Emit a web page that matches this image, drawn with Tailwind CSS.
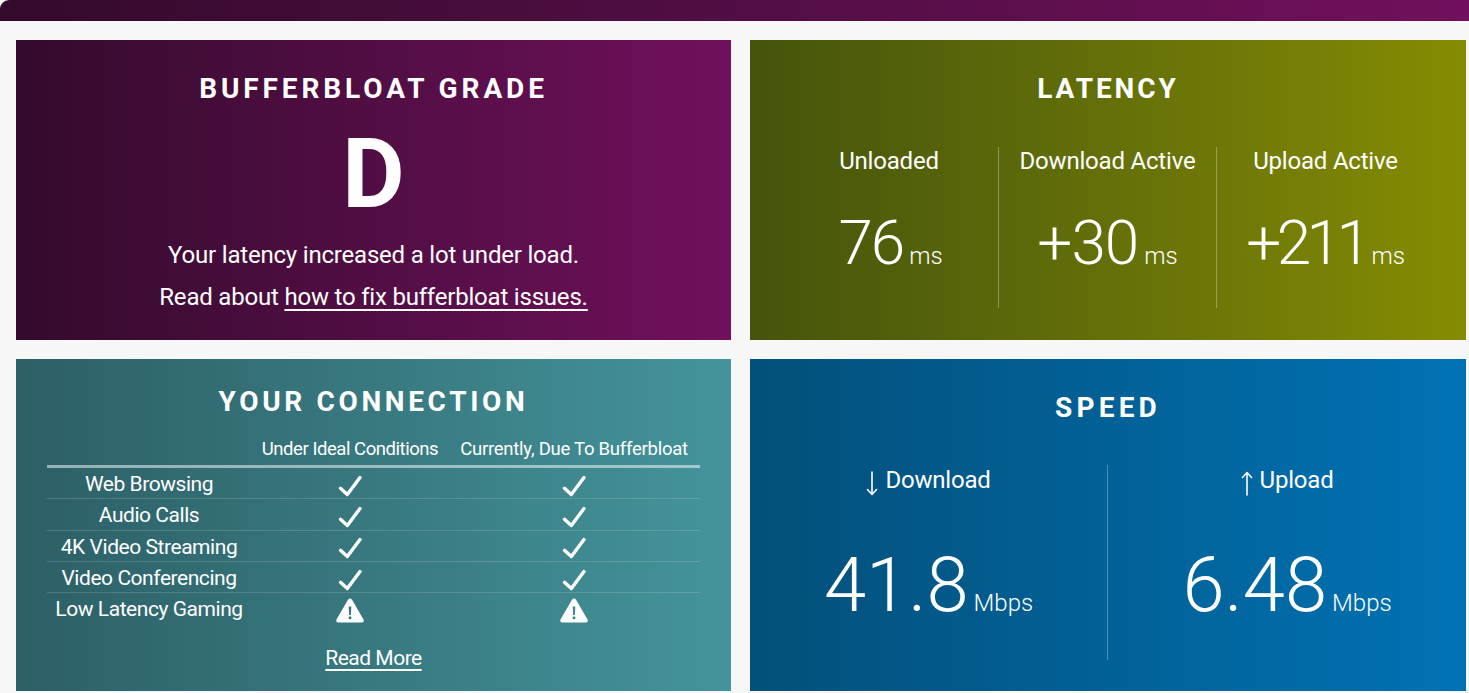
<!DOCTYPE html>
<html lang="en">
<head>
    <meta charset="UTF-8">
    <meta name="viewport" content="width=device-width, initial-scale=1.0">
    <title>Bufferbloat Test Results</title>
    <script src="https://cdn.jsdelivr.net/npm/@tailwindcss/browser@4"></script>
</head>
<body class="bg-[#f7f7f7] h-[693px] overflow-hidden font-['Roboto',sans-serif] text-white">

    <div class="h-[21px] rounded-tl-[9px] bg-linear-to-r from-[#340a2d] to-[#71105c]"></div>

    <main class="grid grid-cols-[715px_716px] grid-rows-[300px_332px] gap-x-[19px] gap-y-[19px] pl-[16px] pt-[19px]">

        <!-- grade -->
        <section class="bg-linear-to-r from-[#340a2d] to-[#71105c] flex flex-col items-center pt-[31px]">
            <h2 class="h-[36px] leading-[36px] text-[28px] font-bold tracking-[3.9px]">BUFFERBLOAT GRADE</h2>
            <div class="mt-[19px] h-[96px] leading-[96px] text-[96px] font-bold">D</div>
            <p class="mt-[12px] h-[42px] leading-[42px] text-[24px] tracking-[-0.2px]">Your latency increased a lot under load.</p>
            <p class="h-[42px] leading-[42px] text-[24px] tracking-[-0.2px]">Read about <a href="#" class="underline decoration-[1.5px] underline-offset-[4px]">how to fix bufferbloat issues.</a></p>
        </section>

        <!-- latency -->
        <section class="bg-linear-to-r from-[#45540b] to-[#858c02] flex flex-col items-center pt-[31px]">
            <h2 class="h-[36px] leading-[36px] text-[28px] font-bold tracking-[2.9px]">LATENCY</h2>
            <div class="mt-[40px] mr-[2px] w-[654px] grid grid-cols-3 h-[161px]">
                <div class="flex flex-col items-center">
                    <div class="mt-[-1px] h-[30px] leading-[30px] text-[24px] tracking-[-0.2px]">Unloaded</div>
                    <div class="mt-[31px] pl-[3px] flex items-baseline">
                        <span class="text-[62px] leading-[72px] font-light tracking-[-2px]">76</span>
                        <span class="ml-[6px] text-[24px] font-light">ms</span>
                    </div>
                </div>
                <div class="flex flex-col items-center border-l border-white/30">
                    <div class="mt-[-1px] h-[30px] leading-[30px] text-[24px] tracking-[-0.2px]">Download Active</div>
                    <div class="mt-[31px] flex items-baseline">
                        <span class="text-[62px] leading-[72px] font-light tracking-[-1px]">+30</span>
                        <span class="ml-[6px] text-[24px] font-light">ms</span>
                    </div>
                </div>
                <div class="flex flex-col items-center border-l border-white/30">
                    <div class="mt-[-1px] h-[30px] leading-[30px] text-[24px] tracking-[-0.2px]">Upload Active</div>
                    <div class="mt-[31px] flex items-baseline">
                        <span class="text-[62px] leading-[72px] font-light tracking-[-4.5px]">+211</span>
                        <span class="ml-[5px] text-[24px] font-light">ms</span>
                    </div>
                </div>
            </div>
        </section>

        <!-- connection -->
        <section class="bg-linear-to-r from-[#2d5f66] to-[#44949b] flex flex-col items-center pt-[25px]">
            <h2 class="h-[36px] leading-[36px] text-[28px] font-bold tracking-[3.65px]">YOUR CONNECTION</h2>
            <div class="mt-[12px] w-[653px] text-[21px] tracking-[-0.45px]">
                <div class="grid grid-cols-[204px_198px_251px] h-[36px] pt-[3px] items-center border-b-[3px] border-white/50 text-[18.5px] text-center">
                    <div></div>
                    <div>Under Ideal Conditions</div>
                    <div class="pr-[1px] tracking-[-0.25px]">Currently, Due To Bufferbloat</div>
                </div>
                <div class="grid grid-cols-[204px_198px_251px] h-[31.33px] items-center border-b border-white/15 text-center">
                    <div class="pt-[1px]">Web Browsing</div>
                    <div class="flex justify-center pt-[4px]"><svg class="w-[24px] h-[22px]" viewBox="0 0 24 22" fill="none" stroke="white" stroke-width="3.4" stroke-linecap="round" stroke-linejoin="round"><polyline points="2.5,13.3 9.3,19.5 22,2.5"/></svg></div>
                    <div class="flex justify-center pt-[4px] pr-[1px]"><svg class="w-[24px] h-[22px]" viewBox="0 0 24 22" fill="none" stroke="white" stroke-width="3.4" stroke-linecap="round" stroke-linejoin="round"><polyline points="2.5,13.3 9.3,19.5 22,2.5"/></svg></div>
                </div>
                <div class="grid grid-cols-[204px_198px_251px] h-[31.33px] items-center border-b border-white/15 text-center">
                    <div class="pt-[1px]">Audio Calls</div>
                    <div class="flex justify-center pt-[3px]"><svg class="w-[24px] h-[22px]" viewBox="0 0 24 22" fill="none" stroke="white" stroke-width="3.4" stroke-linecap="round" stroke-linejoin="round"><polyline points="2.5,13.3 9.3,19.5 22,2.5"/></svg></div>
                    <div class="flex justify-center pt-[3px] pr-[1px]"><svg class="w-[24px] h-[22px]" viewBox="0 0 24 22" fill="none" stroke="white" stroke-width="3.4" stroke-linecap="round" stroke-linejoin="round"><polyline points="2.5,13.3 9.3,19.5 22,2.5"/></svg></div>
                </div>
                <div class="grid grid-cols-[204px_198px_251px] h-[31.33px] items-center border-b border-white/15 text-center">
                    <div class="pt-[1px]">4K Video Streaming</div>
                    <div class="flex justify-center pt-[3px]"><svg class="w-[24px] h-[22px]" viewBox="0 0 24 22" fill="none" stroke="white" stroke-width="3.4" stroke-linecap="round" stroke-linejoin="round"><polyline points="2.5,13.3 9.3,19.5 22,2.5"/></svg></div>
                    <div class="flex justify-center pt-[3px] pr-[1px]"><svg class="w-[24px] h-[22px]" viewBox="0 0 24 22" fill="none" stroke="white" stroke-width="3.4" stroke-linecap="round" stroke-linejoin="round"><polyline points="2.5,13.3 9.3,19.5 22,2.5"/></svg></div>
                </div>
                <div class="grid grid-cols-[204px_198px_251px] h-[31.33px] items-center border-b border-white/15 text-center">
                    <div class="pt-[1px]">Video Conferencing</div>
                    <div class="flex justify-center pt-[4px]"><svg class="w-[24px] h-[22px]" viewBox="0 0 24 22" fill="none" stroke="white" stroke-width="3.4" stroke-linecap="round" stroke-linejoin="round"><polyline points="2.5,13.3 9.3,19.5 22,2.5"/></svg></div>
                    <div class="flex justify-center pt-[4px] pr-[1px]"><svg class="w-[24px] h-[22px]" viewBox="0 0 24 22" fill="none" stroke="white" stroke-width="3.4" stroke-linecap="round" stroke-linejoin="round"><polyline points="2.5,13.3 9.3,19.5 22,2.5"/></svg></div>
                </div>
                <div class="grid grid-cols-[204px_198px_251px] h-[31.33px] items-center text-center">
                    <div class="pt-[1px]">Low Latency Gaming</div>
                    <div class="flex justify-center pt-[2px]"><svg class="w-[28px] h-[25px]" viewBox="0 0 28 25"><path fill="white" fill-rule="evenodd" d="M14 0.5c.8 0 1.5.4 1.9 1.1l11.6 20c.8 1.400-.2 3-1.800 3H2.300c-1.600 0-2.600-1.600-1.800-3l11.600-20C12.500.9 13.200.5 14 .5zM12.700 8.500l.4 8.500h1.800l.4-8.500zM14 18.300a1.500 1.500 0 1 0 0 3a1.500 1.500 0 0 0 0-3z"/></svg></div>
                    <div class="flex justify-center pt-[2px] pr-[1px]"><svg class="w-[28px] h-[25px]" viewBox="0 0 28 25"><path fill="white" fill-rule="evenodd" d="M14 0.5c.8 0 1.5.4 1.9 1.1l11.6 20c.8 1.400-.2 3-1.800 3H2.300c-1.600 0-2.600-1.600-1.800-3l11.600-20C12.500.9 13.200.5 14 .5zM12.700 8.500l.4 8.500h1.800l.4-8.500zM14 18.300a1.500 1.500 0 1 0 0 3a1.500 1.500 0 0 0 0-3z"/></svg></div>
                </div>
            </div>
            <a href="#" class="mt-[18px] text-[21px] leading-[30px] tracking-[-0.5px] underline decoration-[1.5px] underline-offset-[4px]">Read More</a>
        </section>

        <!-- speed -->
        <section class="bg-linear-to-r from-[#03507a] to-[#0072b4] flex flex-col items-center pt-[31px]">
            <h2 class="h-[36px] leading-[36px] text-[28px] font-bold tracking-[4.2px]">SPEED</h2>
            <div class="mt-[39px] w-full grid grid-cols-[357px_1fr] h-[195px]">
                <div class="flex flex-col items-center">
                    <div class="h-[30px] leading-[30px] text-[24px] tracking-[-0.2px] flex items-center">
                        <svg class="w-[12px] h-[25px] mr-[7px] mt-[6px]" viewBox="0 0 12 25" fill="none" stroke="white" stroke-width="1.6" stroke-linecap="round" stroke-linejoin="round"><path d="M6 1v22M1.500 18.500L6 23.500l4.500-5"/></svg>
                        <span>Download</span>
                    </div>
                    <div class="mt-[46px] flex items-baseline">
                        <span class="text-[76px] leading-[88px] font-light">41.8</span>
                        <span class="ml-[5px] text-[24px] font-light">Mbps</span>
                    </div>
                </div>
                <div class="flex flex-col items-center border-l border-white/30">
                    <div class="h-[30px] leading-[30px] text-[24px] tracking-[-0.2px] flex items-center">
                        <svg class="w-[12px] h-[25px] mr-[7px] mt-[6px]" viewBox="0 0 12 25" fill="none" stroke="white" stroke-width="1.6" stroke-linecap="round" stroke-linejoin="round"><path d="M6 24V2M1.500 6.500L6 1.500l4.500 5"/></svg>
                        <span>Upload</span>
                    </div>
                    <div class="mt-[46px] flex items-baseline">
                        <span class="text-[76px] leading-[88px] font-light">6.48</span>
                        <span class="ml-[5px] text-[24px] font-light">Mbps</span>
                    </div>
                </div>
            </div>
        </section>

    </main>
</body>
</html>
